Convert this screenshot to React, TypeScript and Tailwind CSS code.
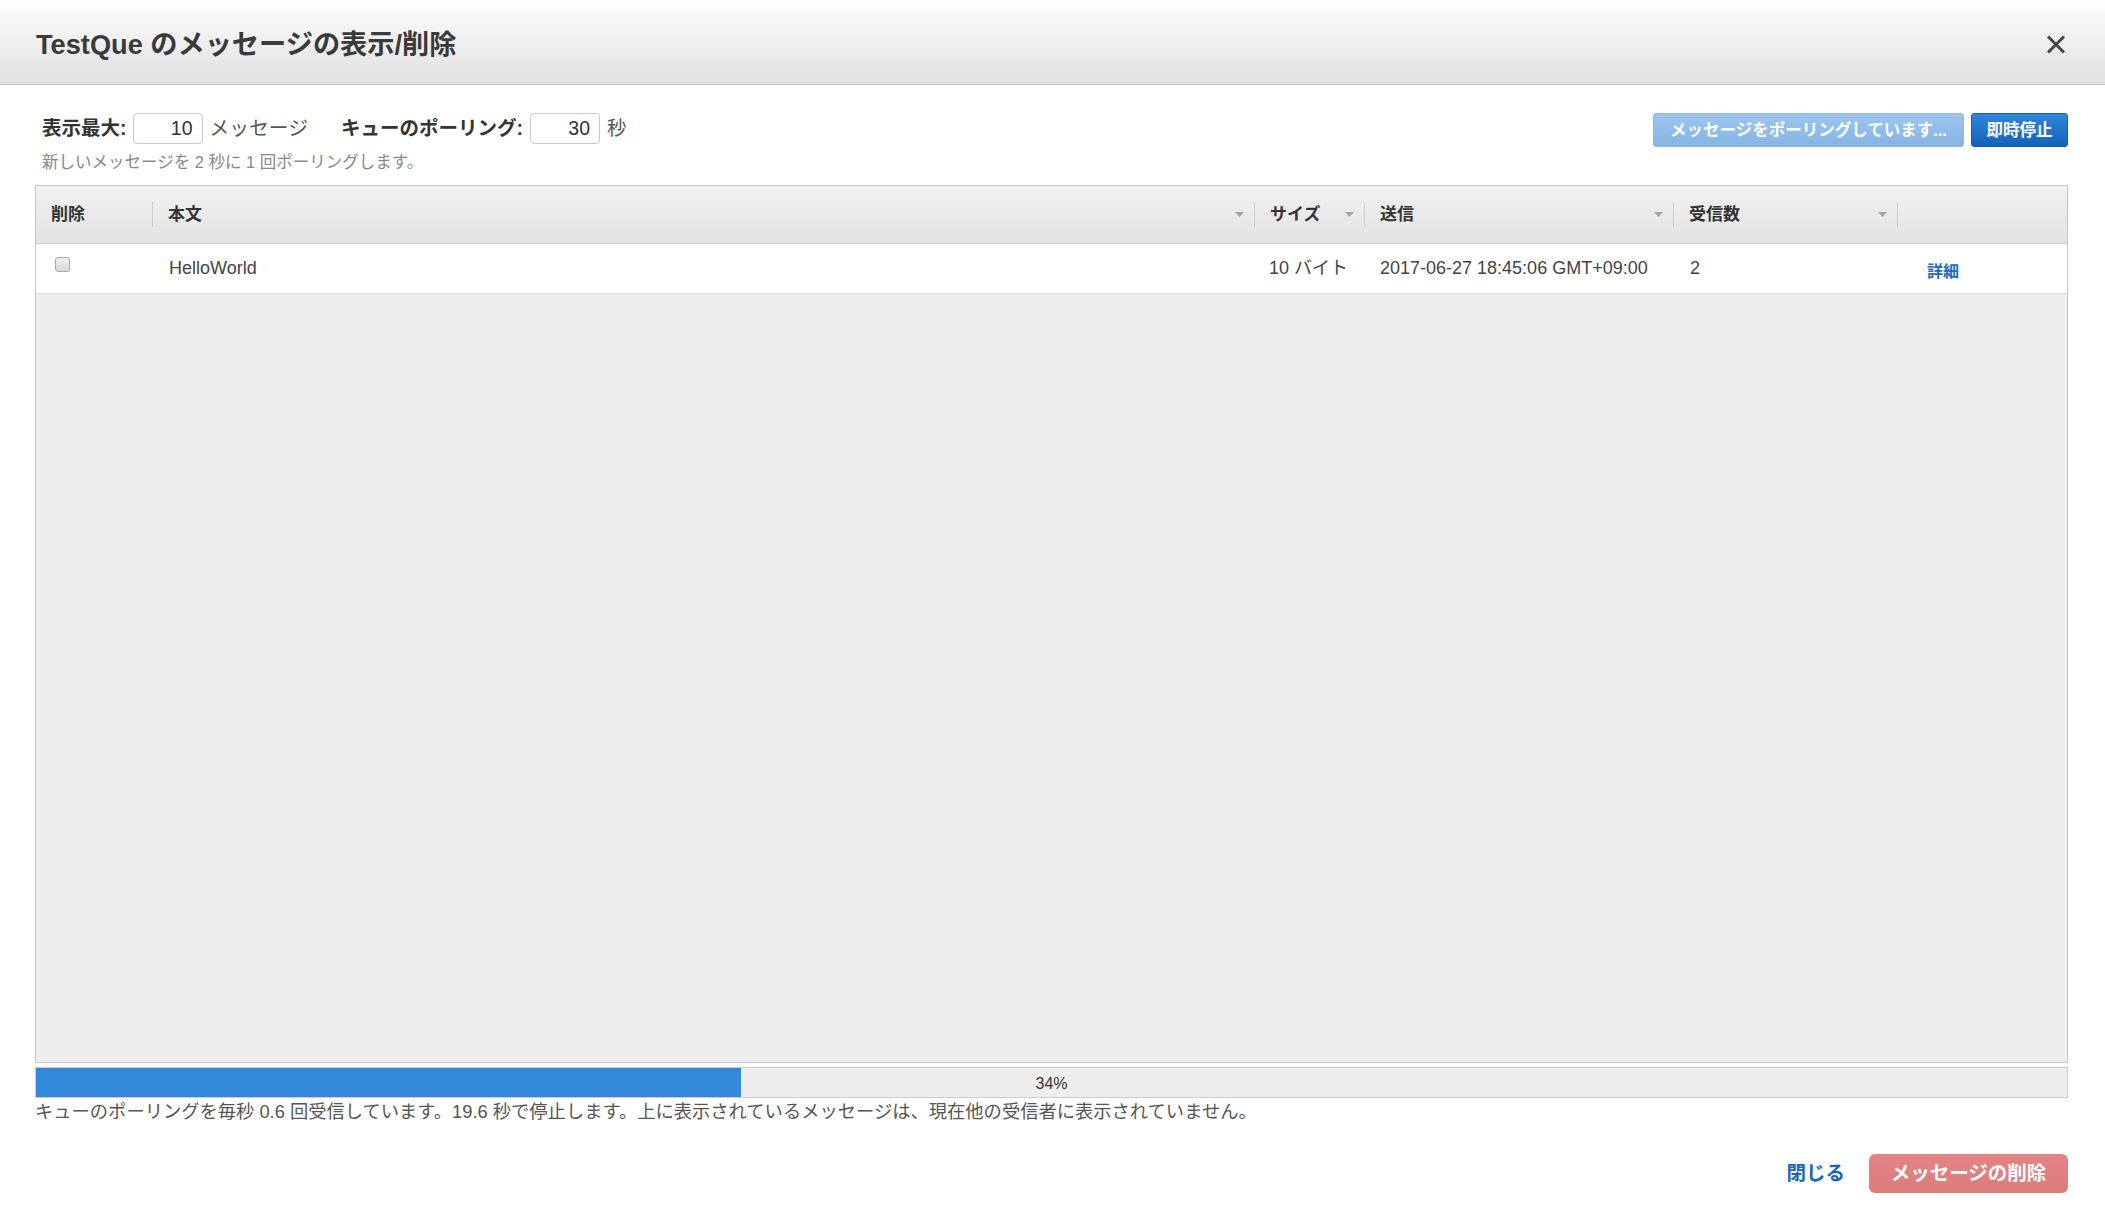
import React from 'react';

const cols = 'grid grid-cols-[117px_1102px_110px_309px_224px_1fr]';

type Column = { label: string; sortable: boolean; divider: boolean };

const columns: Column[] = [
  { label: '削除', sortable: false, divider: true },
  { label: '本文', sortable: true, divider: true },
  { label: 'サイズ', sortable: true, divider: true },
  { label: '送信', sortable: true, divider: true },
  { label: '受信数', sortable: true, divider: true },
  { label: '', sortable: false, divider: false },
];

const messages = [
  { id: 1, body: 'HelloWorld', size: '10 バイト', sent: '2017-06-27 18:45:06 GMT+09:00', received: 2 },
];

const progress = 34;

function Caret() {
  return (
    <svg width="9" height="5" viewBox="0 0 9 5" className="block">
      <path d="M0 0 H9 L4.5 5 Z" fill="#a3a3a3" />
    </svg>
  );
}

function HeadCell({ col }: { col: Column }) {
  return (
    <div className="flex items-center pl-[15px]">
      <span className="text-[17px] font-bold text-[#333]">{col.label}</span>
      <span className="ml-auto flex items-center">
        {col.sortable && <Caret />}
        {col.divider && <span className="ml-[10px] h-[25px] w-px bg-[#cdcdcd]" />}
      </span>
    </div>
  );
}

export default function App() {
  return (
    <div className="h-[1224px] w-full overflow-hidden bg-white font-['Liberation_Sans','Noto_Sans_CJK_JP',sans-serif] text-[#444]">
      {/* header */}
      <div className="flex h-[85px] items-center justify-between border-b border-[#c9c9c9] bg-linear-to-b from-[#fefefe] to-[#e0e0e0] pl-[36px] pr-[39px]">
        <h1 className="pt-[5px] text-[27.2px] font-bold leading-none text-[#3a3a3a]">TestQue のメッセージの表示/削除</h1>
        <svg width="20" height="19" viewBox="0 0 20 19" className="mt-[4px]">
          <path d="M2 1.5 L18 17.5 M18 1.5 L2 17.5" stroke="#444" strokeWidth="3" />
        </svg>
      </div>

      <div className="pl-[35px] pr-[37px] pt-[28px]">
        {/* controls */}
        <div className="flex items-start">
          <div className="flex items-center pl-[7px]">
            <span className="text-[19.5px] font-bold text-[#333]">表示最大:</span>
            <div className="ml-[6px] flex h-[31px] w-[70px] items-center justify-end rounded-[4px] border border-[#c8c8c8] pr-[9px] text-[19.5px] text-[#333]">
              10
            </div>
            <span className="ml-[7px] text-[19.8px] text-[#555]">メッセージ</span>
            <span className="ml-[33px] text-[19.5px] font-bold text-[#333]">キューのポーリング:</span>
            <div className="ml-[7px] flex h-[31px] w-[70px] items-center justify-end rounded-[4px] border border-[#c8c8c8] pr-[9px] text-[19.5px] text-[#333]">
              30
            </div>
            <span className="ml-[7px] text-[19.5px] text-[#555]">秒</span>
          </div>
          <div className="ml-auto flex gap-[7px]">
            <button className="h-[34px] w-[311px] rounded-[3px] border border-[#8cb9e6] bg-linear-to-b from-[#9cc6ee] to-[#86b4e3] text-[16.5px] font-bold text-white">
              メッセージをポーリングしています...
            </button>
            <button className="h-[34px] w-[97px] rounded-[3px] border border-[#1a5ea8] bg-linear-to-b from-[#2f86da] to-[#1462bb] text-[16.5px] font-bold text-white">
              即時停止
            </button>
          </div>
        </div>
        <p className="mt-[5px] pl-[7px] text-[16.5px] leading-[20px] text-[#888]">新しいメッセージを 2 秒に 1 回ポーリングします。</p>

        {/* table */}
        <div className="mt-[13px] flex h-[878px] flex-col border border-[#c6c6c6] bg-[#eeeeee]">
          <div className={`${cols} h-[58px] border-b border-[#cfcfcf] bg-linear-to-b from-[#f1f1f1] to-[#e3e3e3]`}>
            {columns.map((c, i) => (
              <HeadCell key={i} col={c} />
            ))}
          </div>
          {messages.map((m) => (
            <div key={m.id} className={`${cols} h-[50px] items-center border-b border-[#dedede] bg-white text-[18px] text-[#444]`}>
              <div className="pl-[19px]">
                <span className="mb-[9px] block h-[15px] w-[15px] rounded-[3px] border border-[#a9a9a9] bg-linear-to-b from-[#eeeeee] to-[#d9d9d9]" />
              </div>
              <div className="pl-[16px]">{m.body}</div>
              <div className="pl-[14px]">{m.size}</div>
              <div className="pl-[15px]">{m.sent}</div>
              <div className="pl-[16px]">{m.received}</div>
              <div className="pl-[29px] pt-[5px]">
                <a className="text-[16px] font-bold text-[#1a6ac4]">詳細</a>
              </div>
            </div>
          ))}
        </div>

        {/* progress */}
        <div className="relative mt-[4px] h-[31px] border border-[#cccccc] bg-[#eeeeee]">
          <div className="h-full w-[34.7%] bg-[#3388dc]" />
          <span className="absolute inset-0 flex items-center justify-center pt-[2px] text-[16px] text-[#333]">{progress}%</span>
        </div>
        <p className="mt-[3px] text-[18.3px] leading-[22px] text-[#555]">
          キューのポーリングを毎秒 0.6 回受信しています。19.6 秒で停止します。上に表示されているメッセージは、現在他の受信者に表示されていません。
        </p>

        {/* footer */}
        <div className="mt-[31px] flex items-center justify-end">
          <a className="text-[19.5px] font-bold text-[#1a66bd]">閉じる</a>
          <button className="ml-[24px] h-[39px] w-[199px] rounded-[6px] bg-linear-to-b from-[#e38383] to-[#dc7d7d] text-[19.5px] font-bold text-white">
            メッセージの削除
          </button>
        </div>
      </div>
    </div>
  );
}
